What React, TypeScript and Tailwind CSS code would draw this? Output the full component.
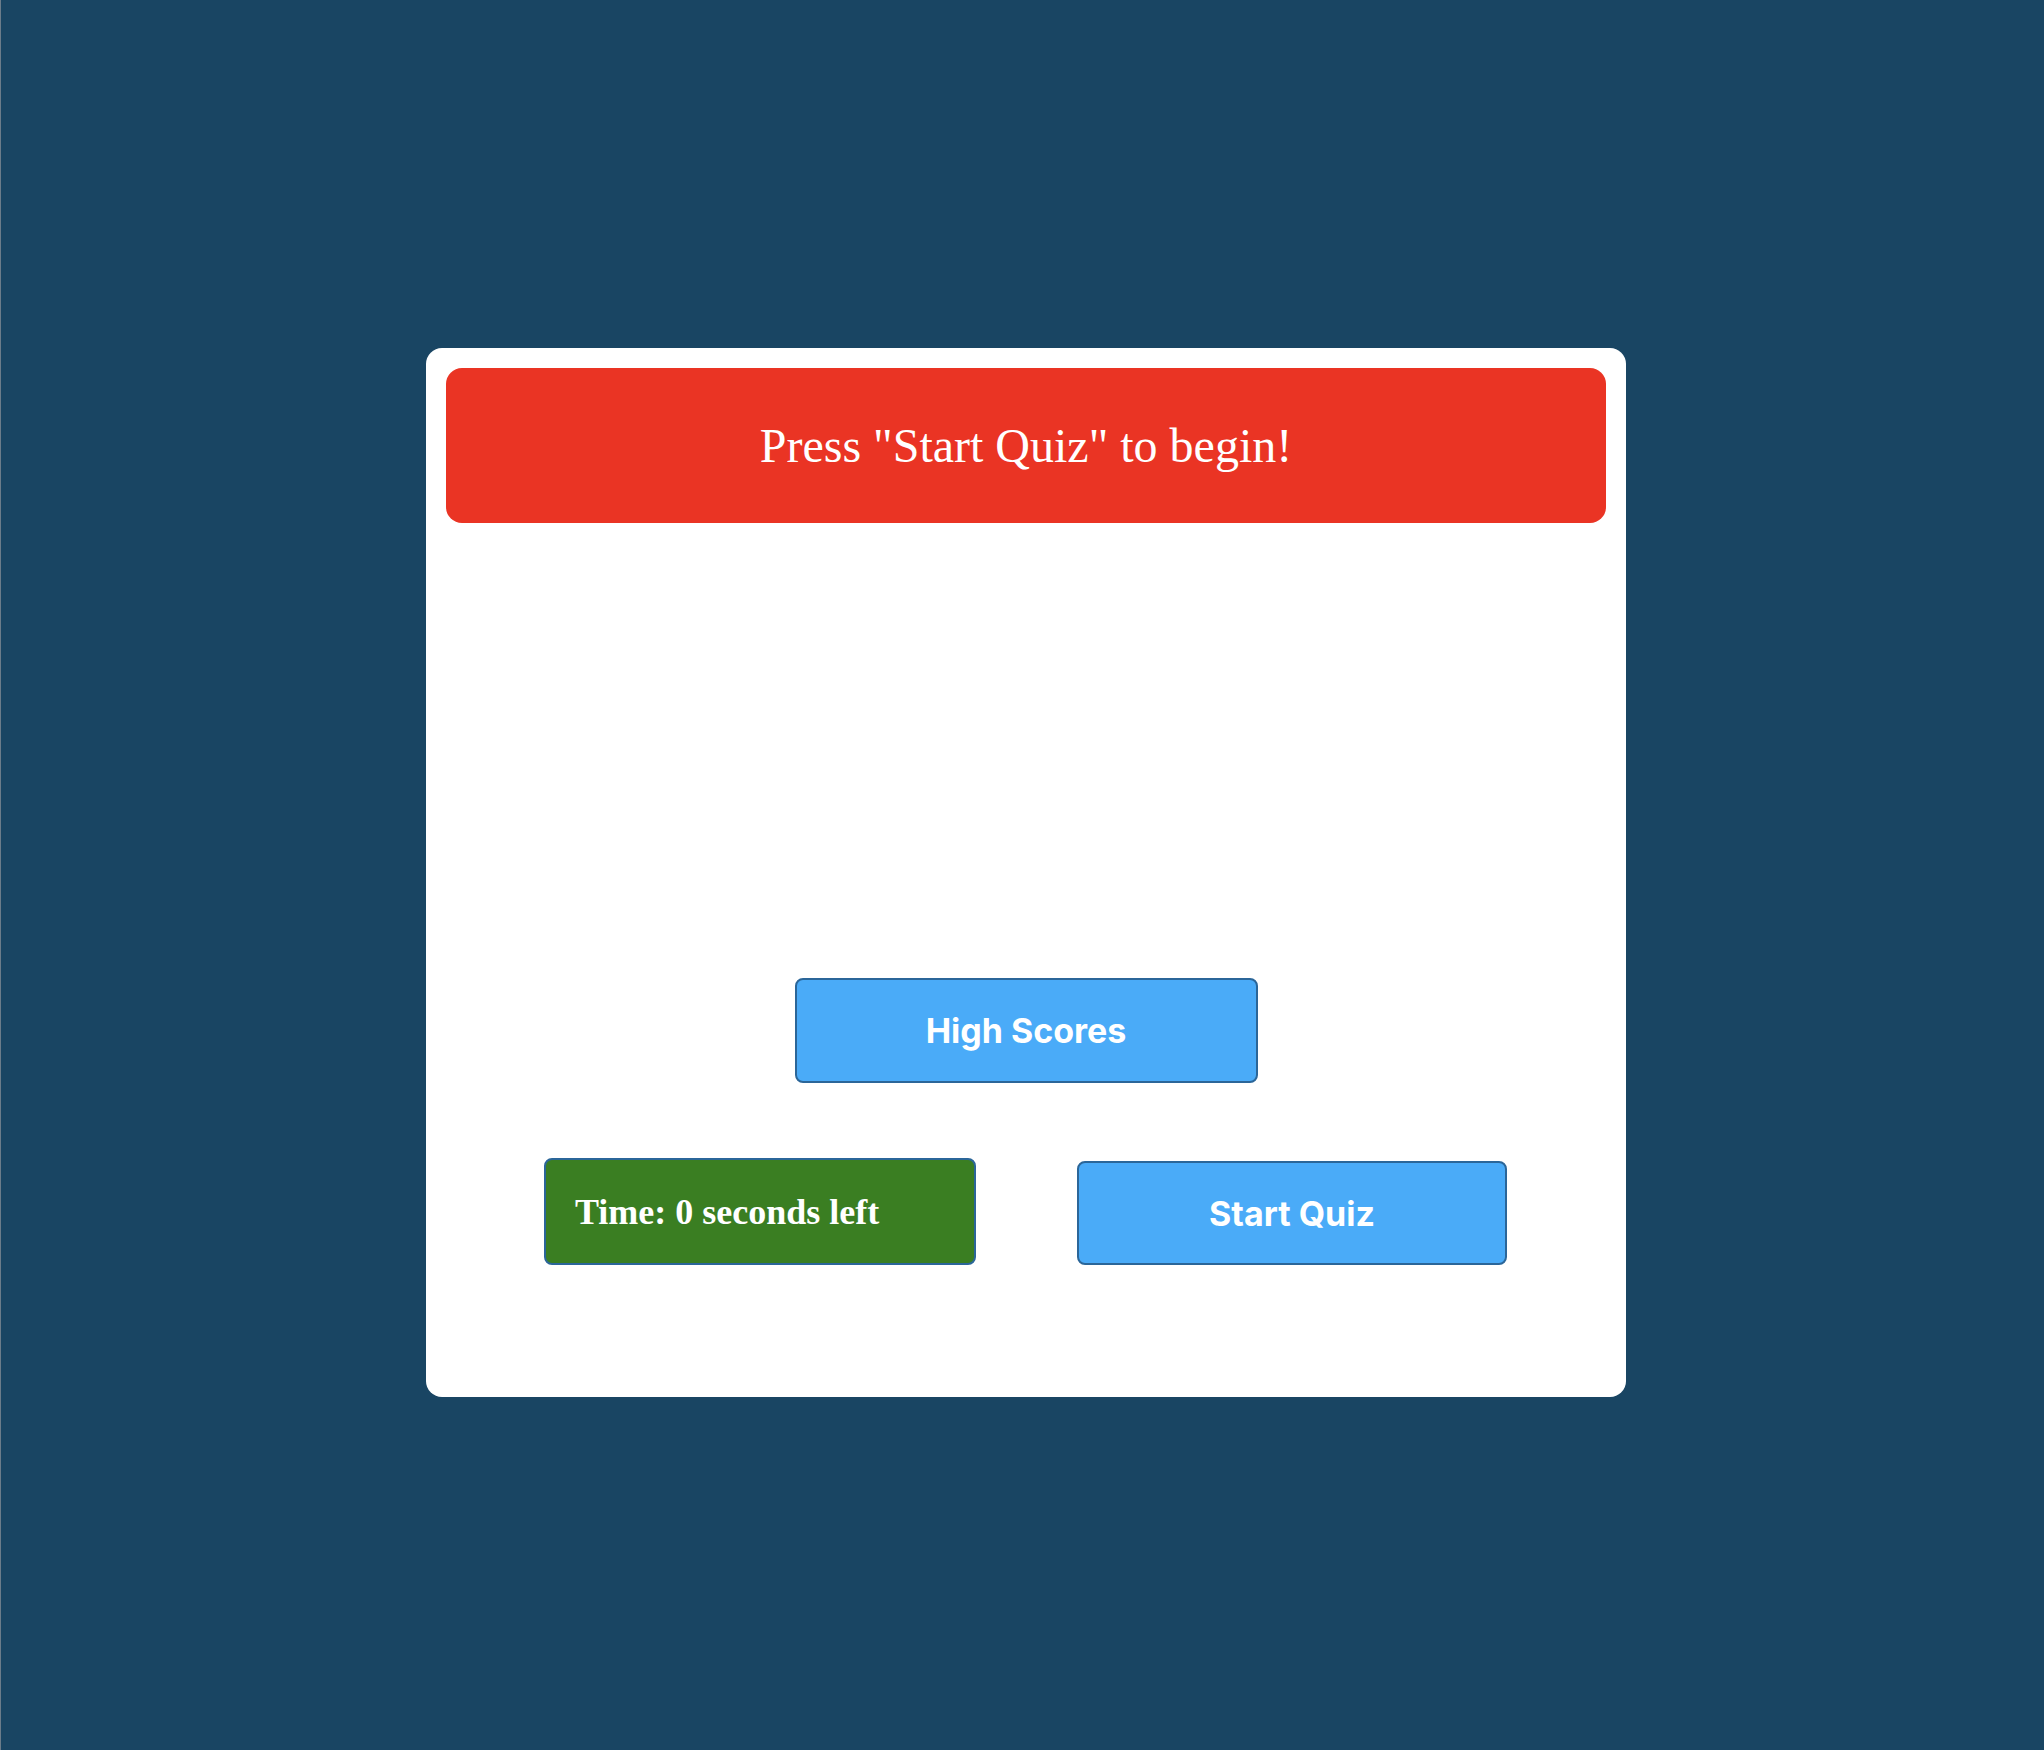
import { useState } from 'react';

export default function App() {
  const [secondsLeft] = useState(0);

  return (
    <div className="min-h-[1750px] w-full bg-[#194563] border-l border-l-[#6b7c8a] flex justify-center pt-[348px] pl-[7px]">
      <div className="w-[1200px] h-[1049px] bg-white rounded-[16px] p-[20px] flex flex-col">
        {/* Header */}
        <div className="h-[155px] bg-[#ea3424] rounded-[16px] flex items-center justify-center">
          <h1 className="text-white text-[48px] leading-none font-normal font-['Liberation_Serif',serif]">
            Press "Start Quiz" to begin!
          </h1>
        </div>

        {/* Quiz area (empty until start) */}
        <div className="h-[455px]"></div>

        <div className="flex justify-center">
          <button className="w-[463px] h-[105px] bg-[#4aabf8] border-2 border-[#2b6699] rounded-[8px] text-white text-[34px] font-bold font-['Inter',sans-serif]">
            High Scores
          </button>
        </div>

        <div className="flex items-start pl-[98px] gap-[101px] mt-[75px]">
          <div className="w-[432px] h-[107px] bg-[#3a7e22] border-2 border-[#2b6699] rounded-[8px] flex items-center pl-[29px]">
            <span className="text-white text-[36px] font-bold font-['Liberation_Serif',serif]">
              Time: {secondsLeft} seconds left
            </span>
          </div>
          <button className="mt-[3px] w-[430px] h-[104px] bg-[#4aabf8] border-2 border-[#2b6699] rounded-[8px] text-white text-[34px] font-bold font-['Inter',sans-serif]">
            Start Quiz
          </button>
        </div>
      </div>
    </div>
  );
}
